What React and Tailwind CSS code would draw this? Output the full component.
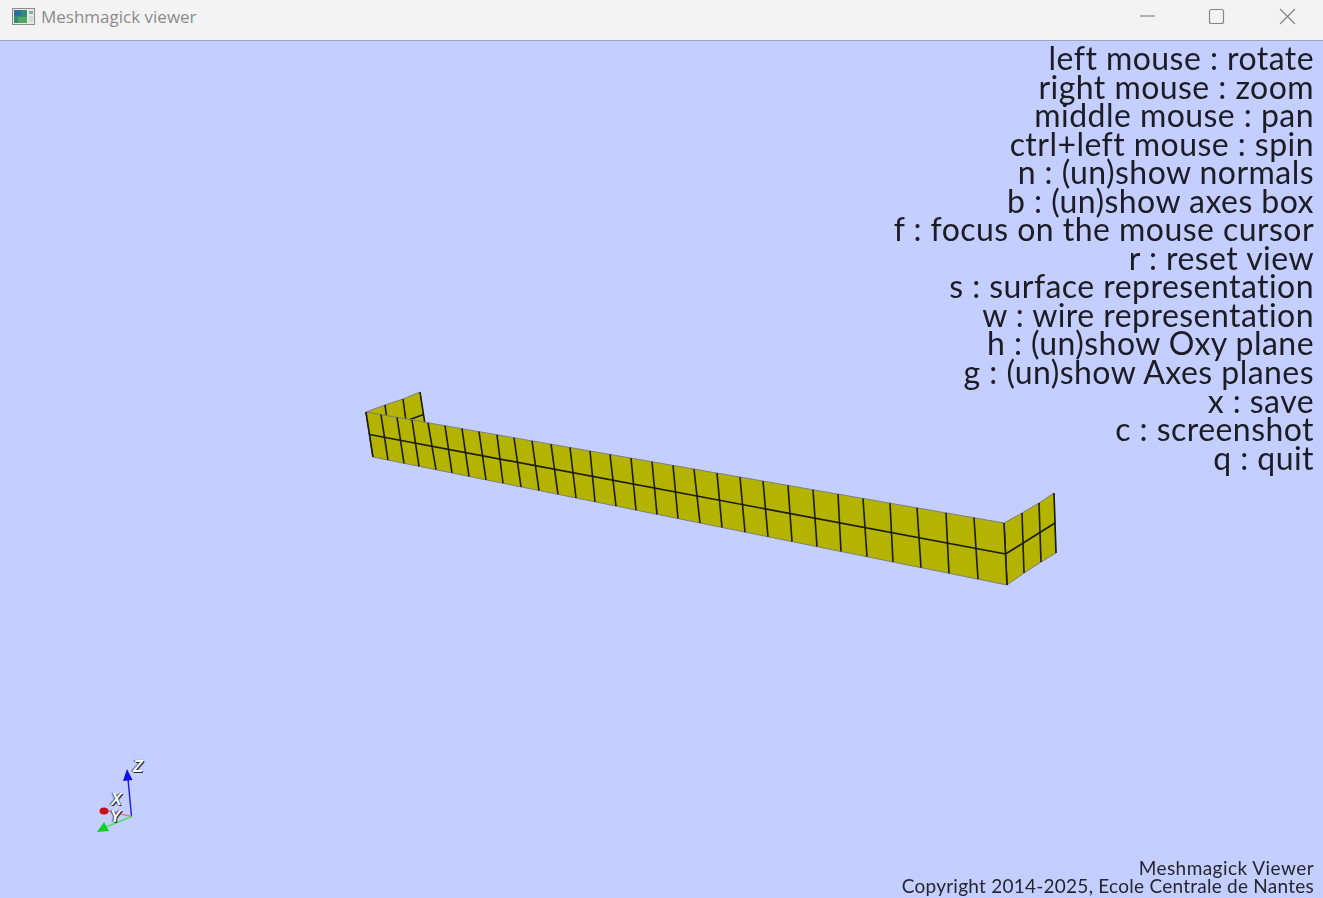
const helpLines = [
  'left mouse : rotate',
  'right mouse : zoom',
  'middle mouse : pan',
  'ctrl+left mouse : spin',
  'n : (un)show normals',
  'b : (un)show axes box',
  'f : focus on the mouse cursor',
  'r : reset view',
  's : surface representation',
  'w : wire representation',
  'h : (un)show Oxy plane',
  'g : (un)show Axes planes',
  'x : save',
  'c : screenshot',
  'q : quit',
];

// column x positions read off the picture; edges of the long wall are straight lines
const topXs = [366,381,397,412,428,445,462,479,497,514,532,551,570,590,610,631,652,673,694,717,740,763,788,813,838,863,890,917,946,974,1004];
const bottomXs = [373,388,404,419,436,452,469,486,503,521,539,558,576,595,616,636,657,678,700,722,745,768,792,817,841,867,893,921,949,978,1007];
const frontTop = topXs.map((x) => [x, 412 + ((x - 366) * 111) / 638]);
const frontBottom = bottomXs.map((x) => [x, 457 + ((x - 373) * 128) / 634]);
const sideTop = [[1004,523],[1022,513],[1039,503],[1054,493]];
const sideBottom = [[1007,585],[1024,573],[1041,562],[1056,553]];
const backTop = [[366,412],[385,405],[403,399],[420,392]];
const backBottom = [[373,457],[391,450],[409,444],[427,437]];

const shift = ([x, y]) => [x, y - 41];
const mid = (a, b) => [(a[0] + b[0]) / 2, (a[1] + b[1]) / 2];
const pts = (list) => list.map((p) => shift(p).join(',')).join(' ');

const Wall = ({ top, bottom }) => {
  const last = top.length - 1;
  const midA = shift(mid(top[0], bottom[0]));
  const midB = shift(mid(top[last], bottom[last]));
  return (
    <g>
      <polygon points={pts([...top, ...[...bottom].reverse()])} fill="#b3b300" stroke="#7d7f78" strokeWidth="1" />
      {top.map((p, i) => {
        const a = shift(p);
        const b = shift(bottom[i]);
        return <line key={i} x1={a[0]} y1={a[1]} x2={b[0]} y2={b[1]} stroke="#1c1c00" strokeWidth="1.6" />;
      })}
      <line x1={midA[0]} y1={midA[1]} x2={midB[0]} y2={midB[1]} stroke="#1c1c00" strokeWidth="1.7" />
    </g>
  );
};

const AppIcon = () => (
  <svg width="24" height="18" viewBox="0 0 24 18">
    <rect x="0.5" y="0.5" width="22" height="16" fill="#e9ebe9" stroke="#8a8a8a" />
    <rect x="2" y="2" width="13" height="13" fill="#2f8c78" />
    <rect x="2" y="2" width="7" height="6" fill="#2d6f9c" />
    <rect x="6" y="9" width="9" height="6" fill="#4fa85c" />
    <rect x="17" y="3" width="4" height="3" fill="#7fb0a8" />
    <rect x="17" y="8" width="4" height="6" fill="#d4d8d4" />
  </svg>
);

const TriadLabel = ({ className, children }) => (
  <span className={`absolute font-['Liberation_Sans',sans-serif] text-[16px] leading-none font-bold italic text-white [text-shadow:1px_1px_0_#222,-1px_0_1px_#444] ${className}`}>
    {children}
  </span>
);

export default function App() {
  return (
    <div className="flex h-[898px] w-[1323px] flex-col overflow-hidden bg-[#c4cfff]">
      <div className="flex h-[41px] shrink-0 items-center border-b border-[#9aa5c6] bg-[#f3f3f3] pb-[7px] pl-[12px]">
        <AppIcon />
        <span className="ml-[5px] font-['Open_Sans',sans-serif] text-[17px] text-[#8b8b8b]">Meshmagick viewer</span>
        <svg className="mt-[7px] ml-auto" width="203" height="40" viewBox="1120 0 203 40" fill="none" stroke="#858585" strokeWidth="1.2">
          <line x1="1140" y1="16" x2="1155" y2="16" />
          <rect x="1209.5" y="9.5" width="14" height="14" rx="2" />
          <line x1="1280" y1="9" x2="1295" y2="24" />
          <line x1="1280" y1="24" x2="1295" y2="9" />
        </svg>
      </div>

      <div className="relative flex min-h-0 flex-1 flex-col items-end justify-between pr-[9px]">
        <svg className="absolute inset-0 blur-[0.5px]" width="1323" height="857" viewBox="0 0 1323 857">
          <Wall top={backTop} bottom={backBottom} />
          <Wall top={sideTop} bottom={sideBottom} />
          <Wall top={frontTop} bottom={frontBottom} />
        </svg>

        <div className="relative pt-[3px] text-right font-['Lato',sans-serif] text-[32px] leading-[28.55px] tracking-[0.45px] text-[#1c1c24] blur-[0.3px]">
          {helpLines.map((line) => (
            <div key={line}>{line}</div>
          ))}
        </div>

        <div className="relative pb-[3px] text-right font-['Lato',sans-serif] text-[19px] leading-[18px] text-[#25252e] blur-[0.3px]">
          <div className="tracking-[0.45px]">Meshmagick Viewer</div>
          <div className="tracking-[0.25px]">Copyright 2014-2025, Ecole Centrale de Nantes</div>
        </div>

        {/* orientation triad, bottom left */}
        <svg className="absolute top-[719px] left-[90px] blur-[0.4px]" width="50" height="80" viewBox="90 760 50 80" fill="none">
          <line x1="131.5" y1="816.5" x2="128" y2="779" stroke="#1a1ae0" strokeWidth="1.4" />
          <polygon points="127,769 123,781 132.5,780" fill="#1010e0" />
          <line x1="131.5" y1="816.5" x2="108" y2="811" stroke="#f07a80" strokeWidth="1.4" />
          <ellipse cx="104" cy="811" rx="4.5" ry="3.5" fill="#c8101c" />
          <line x1="131.5" y1="816.5" x2="106" y2="827" stroke="#50e060" strokeWidth="1.4" />
          <polygon points="97,832 104,822 109,831" fill="#10d020" />
        </svg>
        <TriadLabel className="top-[718px] left-[133px]">Z</TriadLabel>
        <TriadLabel className="top-[751px] left-[111px]">X</TriadLabel>
        <TriadLabel className="top-[768px] left-[110px]">Y</TriadLabel>
      </div>
    </div>
  );
}
